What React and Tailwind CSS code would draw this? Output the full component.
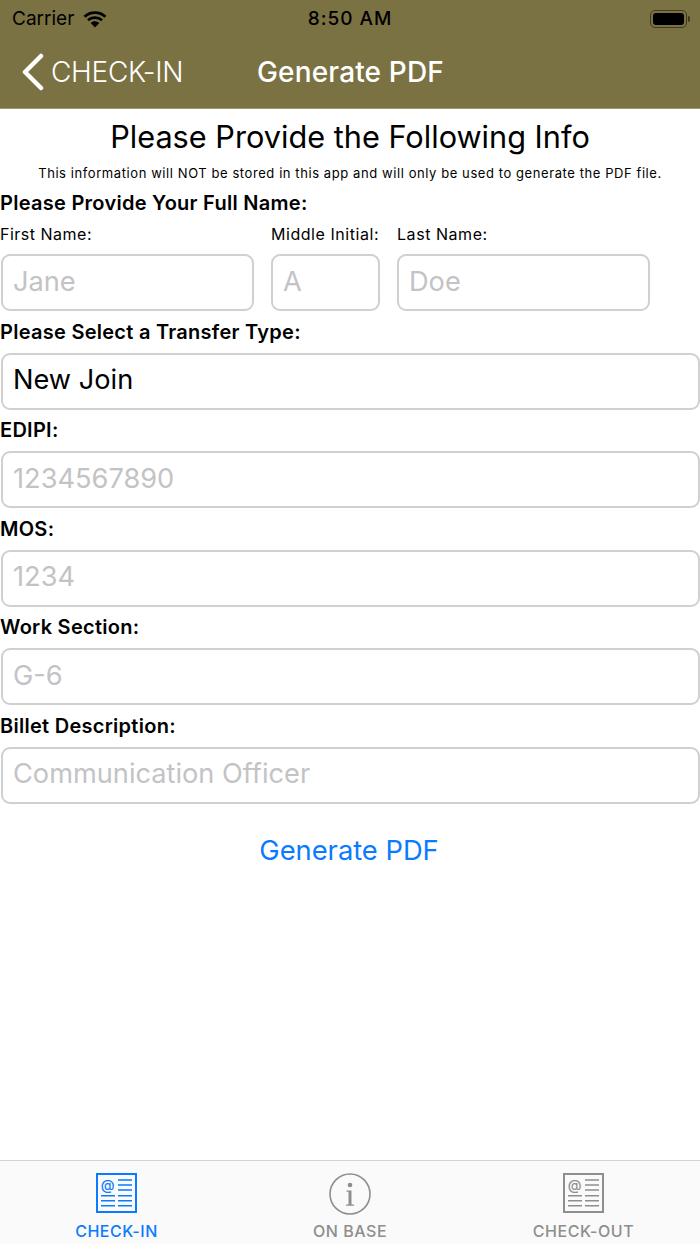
import React from "react";

function Field({ placeholder, value, className = "" }) {
  return (
    <input
      readOnly
      placeholder={placeholder}
      defaultValue={value}
      className={`block h-[57px] rounded-[9px] border-2 border-[#d0d0d0] bg-white px-[10px] pb-[3px] text-[27.2px] text-black placeholder:text-[#c3c3c6] outline-none ${className}`}
    />
  );
}

function Section({ label, placeholder, value }) {
  return (
    <div className="flex flex-col">
      <div className="h-[41.5px] pt-[8.5px] -ml-[1px] text-[20px] leading-[25px] font-semibold tracking-[0.27px] text-black">{label}</div>
      <Field placeholder={placeholder} value={value} className="w-full" />
    </div>
  );
}

function DocIcon({ color }) {
  return (
    <svg width="41" height="40" viewBox="0 0 41 40" fill="none" stroke={color} strokeWidth="1.5">
      <rect x="1" y="1" width="39" height="38" strokeWidth="2" />
      <path d="M22 7h14M22 12h14M22 17h14M5 22.700h14M22 22.700h14M5 27.700h14M22 27.700h14M5 32.700h14M22 32.700h14" />
      <text x="11.700" y="17" textAnchor="middle" fontSize="14" fontWeight="500" fill={color} stroke="none" fontFamily="Inter, sans-serif">@</text>
    </svg>
  );
}

function InfoIcon({ color }) {
  return (
    <svg width="42" height="42" viewBox="0 0 42 42" fill="none">
      <circle cx="21" cy="21" r="20" stroke={color} strokeWidth="1.6" />
      <circle cx="21" cy="12" r="2.300" fill={color} />
      <path d="M17.500 17.500h5v14h2.500v1.300h-8v-1.300h2.500v-12.700h-2z" fill={color} />
    </svg>
  );
}

function Tab({ label, color, icon }) {
  return (
    <div className="flex w-[233px] flex-col items-center pt-[12px]">
      <div className="flex h-[42px] items-start">{icon}</div>
      <div className="mt-[6px] text-[16px] leading-[20px] font-medium tracking-[0.55px]" style={{ color }}>{label}</div>
    </div>
  );
}

export default function App() {
  return (
    <div className="flex h-[1244px] w-[700px] flex-col overflow-hidden bg-white font-['Inter','Liberation_Sans',sans-serif]">
      <header className="h-[109px] shrink-0 border-b border-[#9a9678] bg-[#7b7243]">
        <div className="flex h-[38px] items-center justify-between pl-[12px] pr-[10px]">
          <div className="flex w-[200px] items-center gap-[8px] text-[19px] text-black">
            <span>Carrier</span>
            <svg width="26" height="19" viewBox="0 0 26 18" fill="black">
              <path d="M13 3.500c3.700 0 7 1.400 9.500 3.700l1.900-2A17 17 0 0 0 13 .8 17 17 0 0 0 1.600 5.200l1.900 2C6 4.900 9.300 3.500 13 3.500z" />
              <path d="M13 8.500c2.300 0 4.400.9 6 2.300l1.900-2A11.800 11.800 0 0 0 13 5.700c-3 0-5.800 1.200-7.900 3.100l1.900 2c1.600-1.400 3.700-2.300 6-2.300z" />
              <path d="M13 10.700c-1.700 0-3.200.6-4.300 1.700L13 17l4.300-4.600a6.200 6.200 0 0 0-4.300-1.700z" />
            </svg>
          </div>
          <div className="-ml-[2px] text-[19px] font-medium tracking-[1px] text-black">8:50 AM</div>
          <div className="flex w-[200px] items-center justify-end">
            <div className="flex h-[18px] w-[37px] items-center rounded-[5px] border border-[#3f3a22] p-[2px]">
              <div className="h-full w-full rounded-[3px] bg-black" />
            </div>
            <div className="ml-[1px] h-[6px] w-[2px] rounded-r-full bg-[#3f3a22]" />
          </div>
        </div>
        <div className="relative flex h-[66px] items-center pt-[2px]">
          <div className="flex items-center pl-[21px]">
            <svg width="24" height="38" viewBox="0 0 24 38" fill="none" stroke="white" strokeWidth="4.500" strokeLinecap="round" strokeLinejoin="round">
              <path d="M20 3 4 19l16 16" />
            </svg>
            <span className="ml-[6px] text-[28px] font-light tracking-[-0.3px] text-white">CHECK-IN</span>
          </div>
          <div className="absolute inset-x-0 pl-[1px] text-center text-[28px] font-medium tracking-[0.15px] text-white">Generate PDF</div>
        </div>
      </header>

      <main className="flex min-h-0 flex-1 flex-col">
        <h1 className="mt-[9px] text-center text-[30.7px] leading-[38px] font-normal text-black">Please Provide the Following Info</h1>
        <p className="mt-[8px] text-center text-[13px] leading-[18px] tracking-[0.58px] text-black">
          This information will NOT be stored in this app and will only be used to generate the PDF file.
        </p>
        <div className="mt-[9px] text-[20px] leading-[25px] font-semibold tracking-[0.27px] text-black">Please Provide Your Full Name:</div>
        <div className="mt-[7px] flex gap-[17px] pl-[1px]">
          <div className="w-[253px]">
            <div className="-ml-[1px] text-[16px] leading-[22px] tracking-[0.5px] text-black">First Name:</div>
            <Field placeholder="Jane" className="mt-[9px] w-full" />
          </div>
          <div className="w-[109px]">
            <div className="text-[16px] leading-[22px] tracking-[0.55px] whitespace-nowrap text-black">Middle Initial:</div>
            <Field placeholder="A" className="mt-[9px] w-full" />
          </div>
          <div className="w-[253px]">
            <div className="text-[16px] leading-[22px] tracking-[0.55px] text-black">Last Name:</div>
            <Field placeholder="Doe" className="mt-[9px] w-full" />
          </div>
        </div>
        <div className="flex flex-col pl-[1px]">
          <Section label="Please Select a Transfer Type:" value="New Join" />
          <Section label="EDIPI:" placeholder="1234567890" />
          <Section label="MOS:" placeholder="1234" />
          <Section label="Work Section:" placeholder="G-6" />
          <Section label="Billet Description:" placeholder="Communication Officer" />
        </div>
        <div className="mt-[28px] pr-[2px] text-center text-[27.3px] leading-[38px] text-[#0a7aff]">Generate PDF</div>
      </main>

      <nav className="flex h-[84px] shrink-0 justify-between border-t border-[#d3d3d3] bg-[#fafafa]">
        <Tab label="CHECK-IN" color="#0a7aff" icon={<DocIcon color="#0a7aff" />} />
        <Tab label="ON BASE" color="#8e8e8e" icon={<InfoIcon color="#8e8e8e" />} />
        <Tab label="CHECK-OUT" color="#8e8e8e" icon={<DocIcon color="#8e8e8e" />} />
      </nav>
    </div>
  );
}
